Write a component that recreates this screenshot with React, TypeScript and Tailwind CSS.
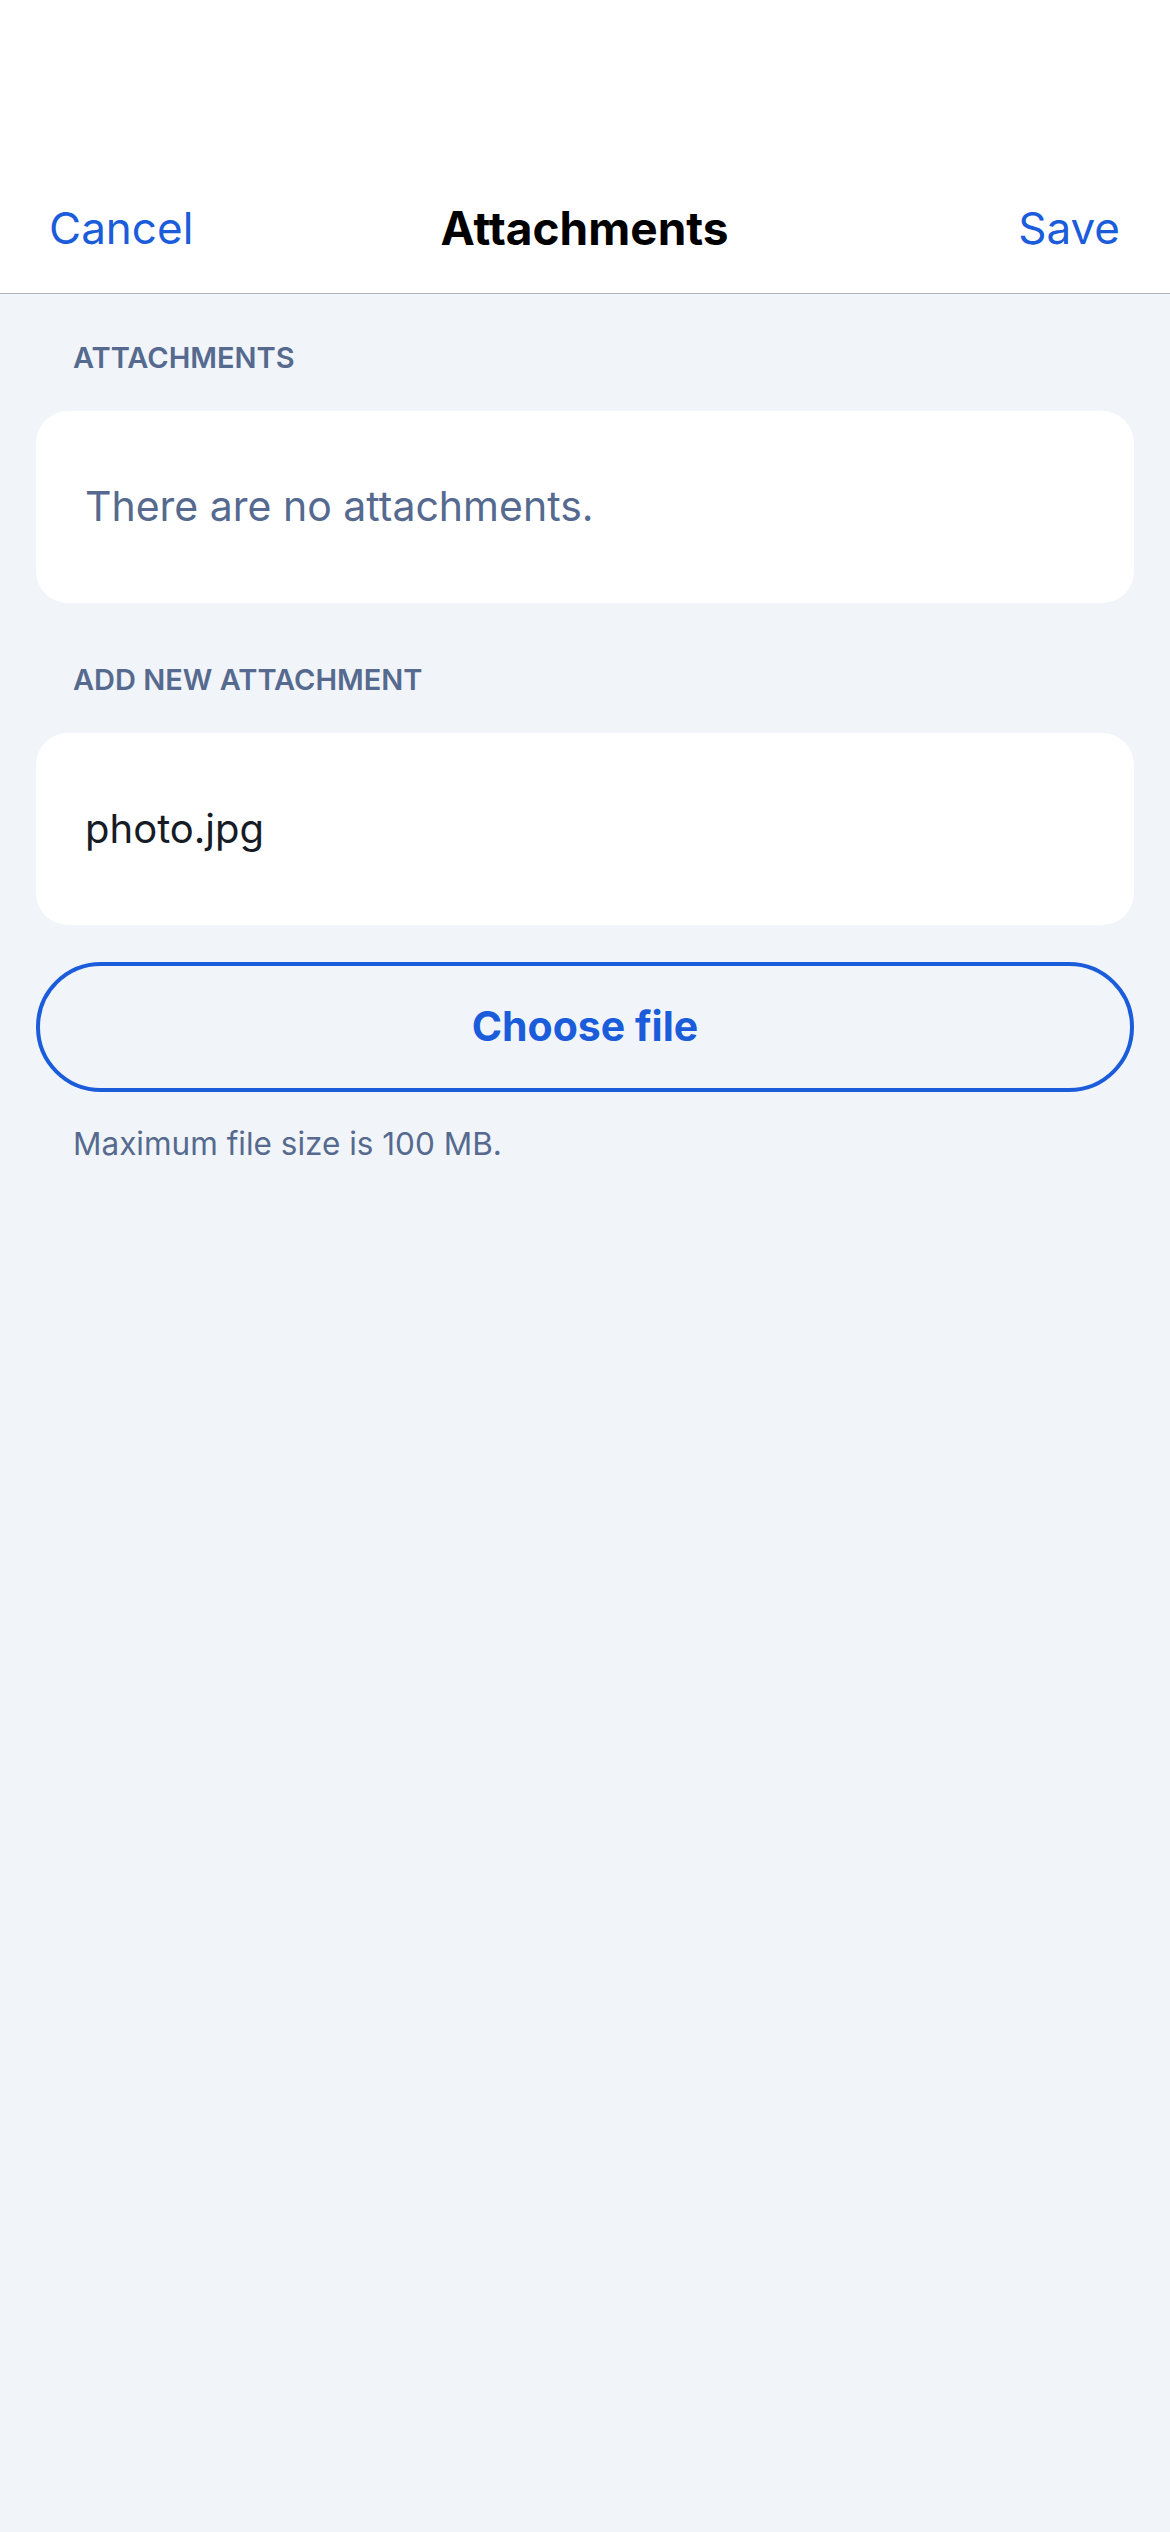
const font = "font-['Inter','Noto_Sans',sans-serif]";

const SectionLabel = ({ children }: { children: string }) => (
	<div className="pl-[37px] text-[29px] leading-[36px] font-semibold text-[#566a8f]">
		{children}
	</div>
);

const Card = ({ children }: { children: React.ReactNode }) => (
	<div className="flex h-[192px] items-center rounded-[32px] bg-white pl-[49px]">
		{children}
	</div>
);

export default function App() {
	return (
		<div className={`min-h-[2532px] w-full bg-[#f1f5f9] ${font}`}>
			<header className="border-b-[1.5px] border-[#b3b3b3] bg-white pt-[163px]">
				<div className="grid h-[130px] grid-cols-[1fr_auto_1fr] items-center pl-[49px] pr-[50px]">
					<button className="justify-self-start text-[44px] text-[#1b5cdb]">Cancel</button>
					<h1 className="text-[46px] font-bold text-black">Attachments</h1>
					<button className="justify-self-end text-[44px] text-[#1b5cdb]">Save</button>
				</div>
			</header>

			<main className="px-[36px]">
				<div className="mt-[46px]">
					<SectionLabel>ATTACHMENTS</SectionLabel>
				</div>
				<div className="mt-[35px]">
					<Card>
						<span className="text-[41px] text-[#566a8f]">There are no attachments.</span>
					</Card>
				</div>

				<div className="mt-[59px]">
					<SectionLabel>ADD NEW ATTACHMENT</SectionLabel>
				</div>
				<div className="mt-[35px]">
					<Card>
						<span className="text-[40px] text-[#161b26]">photo.jpg</span>
					</Card>
				</div>

				<button className="mt-[37px] flex h-[130px] w-full items-center justify-center rounded-full border-[4px] border-[#1b5cdb] text-[41px] font-bold text-[#1b5cdb]">
					Choose file
				</button>

				<p className="mt-[32px] pl-[37px] text-[31.5px] leading-[40px] text-[#566a8f]">
					Maximum file size is 100 MB.
				</p>
			</main>
		</div>
	);
}
